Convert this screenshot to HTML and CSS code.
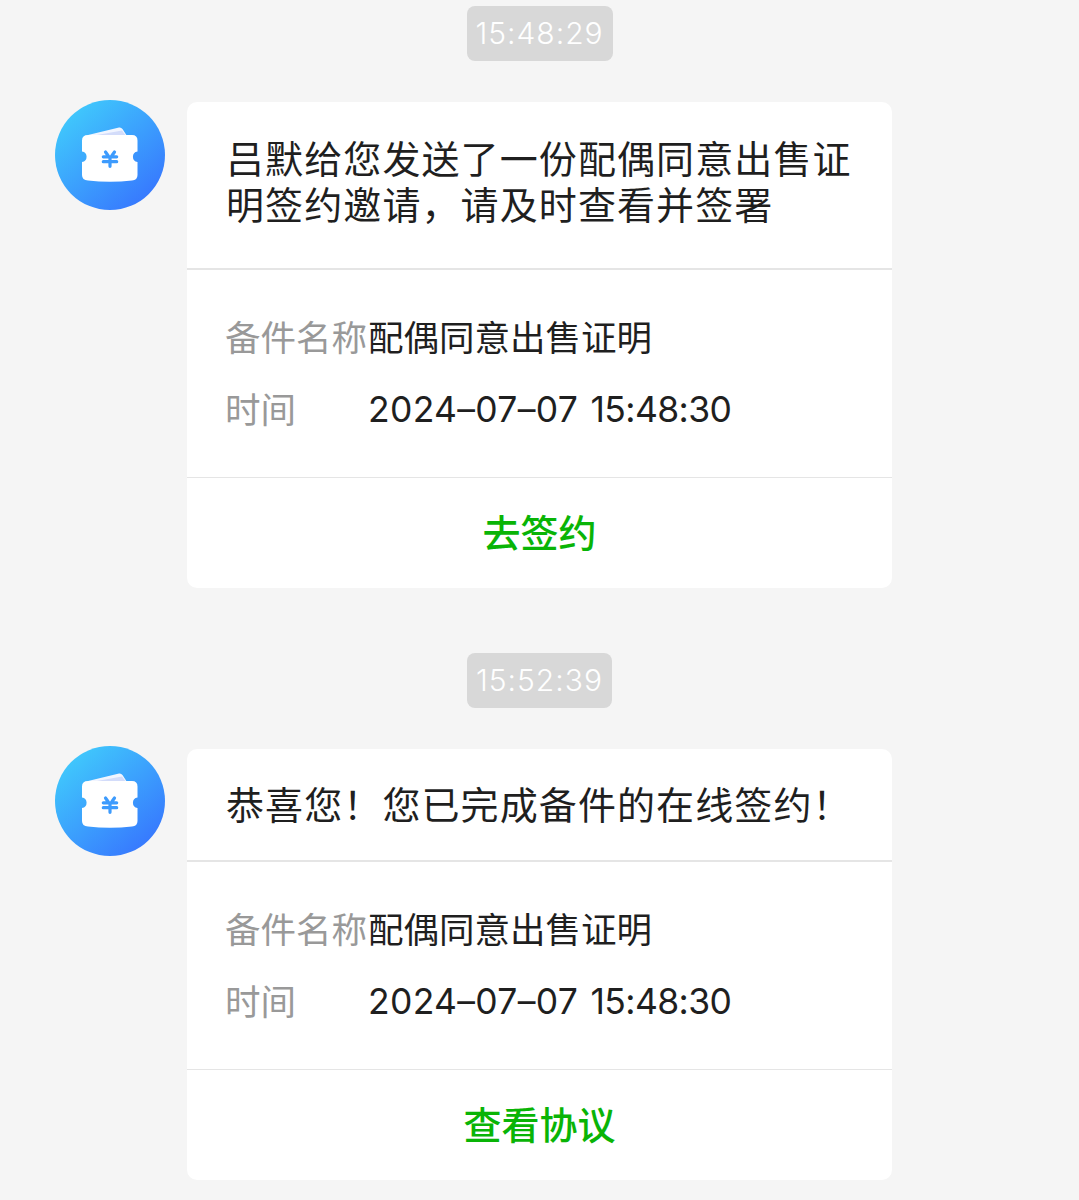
FILE: index.html
```html
<!DOCTYPE html>
<html lang="zh-CN">
<head>
  <meta charset="UTF-8">
  <title>消息</title>
  <link rel="stylesheet" href="styles.css">
</head>
<body>
  <svg class="defs" width="0" height="0">
    <defs>
      <linearGradient id="blue" x1="0.15" y1="0.1" x2="0.85" y2="0.9">
        <stop offset="0" stop-color="#40c8fc"/>
        <stop offset="1" stop-color="#3778fe"/>
      </linearGradient>
      <symbol id="wallet" viewBox="0 0 110 110">
        <circle cx="55" cy="55" r="55" fill="url(#blue)"/>
        <path d="M33 35 L64 27.5 Q66 27 67.5 29 L72 36 Z" fill="#f1f5ff"/>
        <path d="M42 35 L67 30.5 L71 36 Z" fill="#d3dcfa"/>
        <path d="M33 35 H77 Q82.500 35 82.500 40.500 V51.500 A5.300 5.300 0 0 0 82.500 62 V75 Q82.500 80 77 80.500 Q55 83 33 80.500 Q27 80 27 75 V62 A5.300 5.300 0 0 0 27 51.500 V40.500 Q27 35 33 35 Z" fill="#fff"/>
        <path d="M50.500 52 L53 55.500 M59.500 52 L57 55.500 M48.300 56.800 H61.700 M48.300 61.700 H61.700 M55 57 V66.300" fill="none" stroke="#3d9bfd" stroke-width="3.200" stroke-linecap="round"/>
      </symbol>
    </defs>
  </svg>

  <div class="chat">
    <div class="time"><span>15:48:29</span></div>
    <div class="message">
      <svg class="avatar"><use href="#wallet"/></svg>
      <div class="card">
        <div class="card-title two-lines">吕默给您发送了一份配偶同意出售证<br>明签约邀请，请及时查看并签署</div>
        <div class="card-info">
          <div class="row"><span class="label">备件名称</span><span class="value">配偶同意出售证明</span></div>
          <div class="row"><span class="label">时间</span><span class="value date">2024–07–07 <span class="clock">15:48:30</span></span></div>
        </div>
        <a class="card-btn">去签约</a>
      </div>
    </div>

    <div class="time second"><span>15:52:39</span></div>
    <div class="message last">
      <svg class="avatar"><use href="#wallet"/></svg>
      <div class="card">
        <div class="card-title">恭喜您！您已完成备件的在线签约！</div>
        <div class="card-info">
          <div class="row"><span class="label">备件名称</span><span class="value">配偶同意出售证明</span></div>
          <div class="row"><span class="label">时间</span><span class="value date">2024–07–07 <span class="clock">15:48:30</span></span></div>
        </div>
        <a class="card-btn">查看协议</a>
      </div>
    </div>
  </div>
</body>
</html>
```
FILE: styles.css
```css
body {
  margin: 0;
  background-color: #f5f5f5;
  font-family: Inter, "Noto Sans CJK SC", sans-serif;
  color: #1f1f1f;
}

.defs {
  display: block;
}

.chat {
  height: 1200px;
  overflow: hidden;
  box-sizing: border-box;
  padding-top: 6px;
}

.time {
  display: flex;
  justify-content: center;
  height: 55px;
}

.time span {
  width: 146px;
  border-radius: 8px;
  background-color: #d8d8d8;
  color: #fff;
  font-size: 30px;
  font-weight: 350;
  line-height: 55px;
  letter-spacing: 1px;
  text-align: center;
}

.time.second {
  margin-top: 65px;
}

.time.second span {
  width: 145px;
}

.message {
  display: flex;
  align-items: flex-start;
  padding: 39px 0 0 55px;
}

.message.last {
  padding-top: 38px;
}

.avatar {
  width: 110px;
  height: 110px;
  margin-right: 22px;
}

.card {
  width: 705px;
  margin-top: 2px;
  border-radius: 10px;
  background-color: #fff;
}

.last .card {
  margin-top: 3px;
}

.card-title {
  box-sizing: border-box;
  height: 113px;
  padding: 33px 0 0 39px;
  border-bottom: 2px solid #e5e5e5;
  font-size: 38px;
  line-height: 46px;
  letter-spacing: 1.1px;
  white-space: nowrap;
}

.card-title.two-lines {
  height: 168px;
  padding-top: 34px;
}

.card-info {
  box-sizing: border-box;
  height: 208px;
  padding: 33px 0 0 38px;
  border-bottom: 1px solid #e5e5e5;
}

.row {
  display: flex;
  height: 72px;
  font-size: 35.5px;
  line-height: 72px;
}

.label {
  width: 143px;
  color: #999;
  white-space: nowrap;
}

.date {
  font-size: 35.5px;
  line-height: 69px;
  letter-spacing: 0.3px;
  word-spacing: 2px;
}

.clock {
  letter-spacing: -0.6px;
}

.card-btn {
  display: block;
  height: 110px;
  color: #09b406;
  font-size: 38px;
  font-weight: 500;
  line-height: 111px;
  text-align: center;
}
```
